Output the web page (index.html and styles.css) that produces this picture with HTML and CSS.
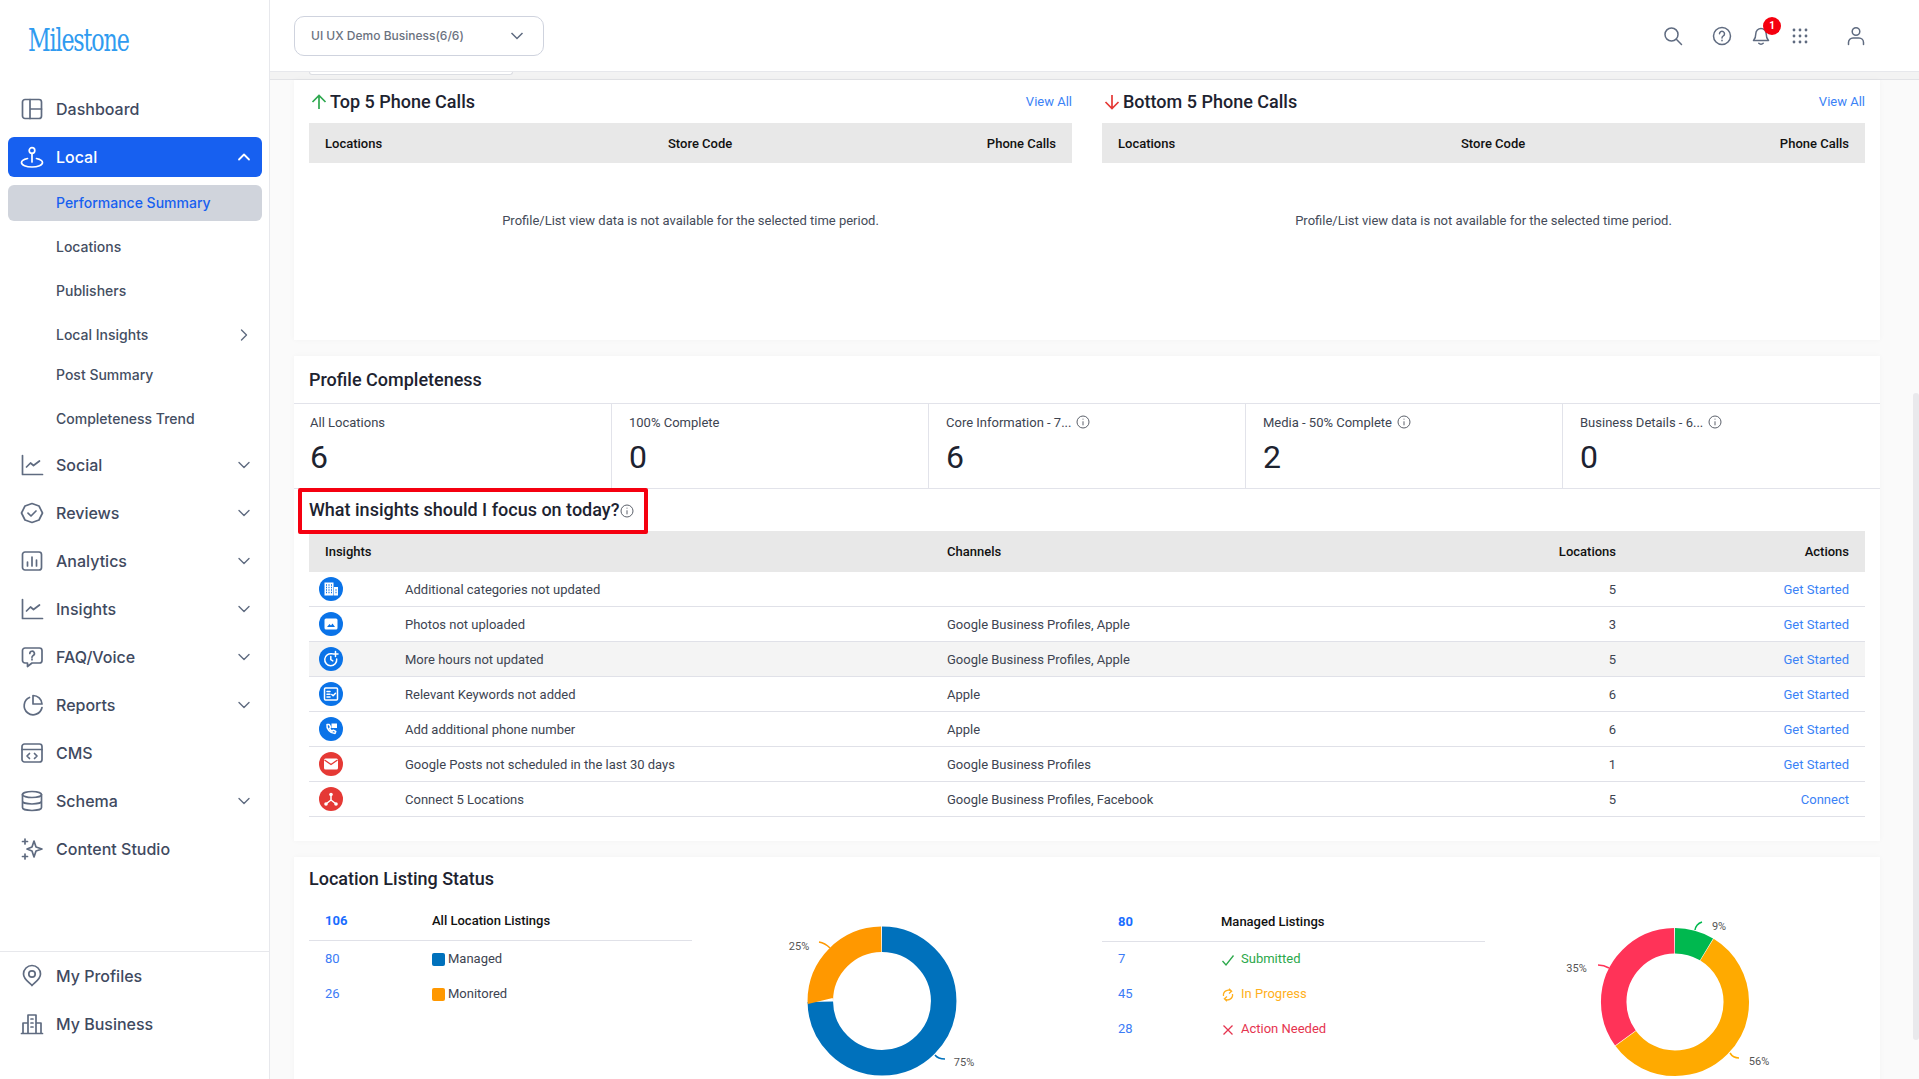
FILE: index.html
```html
<!DOCTYPE html>
<html lang="en">
<head>
<meta charset="utf-8">
<title>Performance Summary</title>
<link rel="stylesheet" href="styles.css">
</head>
<body>
<div class="app">
  <aside class="sidebar">
    <div class="logo-wrap"><span class="logo">Milestone</span></div>
    <nav class="nav">
      <a class="item"><svg class="ic" viewBox="0 0 24 24"><rect x="2.500" y="2.500" width="19" height="19" rx="2.500"/><path d="M10 2.500v19M10 12h11.500"/></svg><span>Dashboard</span></a>
      <a class="item active"><svg class="ic" viewBox="0 0 24 24"><circle cx="12" cy="5.500" r="2.800"/><path d="M12 8.300V17M7.500 13.500C4 14.300 1.500 15.800 1.500 17.500c0 2.500 4.500 4.500 10.500 4.500s10.500-2 10.500-4.500c0-1.700-2.500-3.200-6-4"/></svg><span>Local</span><svg class="chev" viewBox="0 0 14 14"><path d="M2 9.500l5-5 5 5"/></svg></a>
      <a class="sub current">Performance Summary</a>
      <a class="sub">Locations</a>
      <a class="sub">Publishers</a>
      <a class="sub">Local Insights<svg class="chev" viewBox="0 0 14 14"><path d="M4.500 2l5 5-5 5"/></svg></a>
      <a class="sub tight">Post Summary</a>
      <a class="sub">Completeness Trend</a>
      <a class="item"><svg class="ic" viewBox="0 0 24 24"><path d="M2.500 2.500v19h20M6.500 14l4-4 3 2.500 6-4.500"/></svg><span>Social</span><svg class="chev" viewBox="0 0 14 14"><path d="M2 4.500l5 5 5-5"/></svg></a>
      <a class="item"><svg class="ic" viewBox="0 0 24 24"><path d="M12 2.500l7 2.500 3.500 7-3.500 7-7 2.500-7-2.500L1.500 12 5 5z"/><path d="M8 12.200l3 2.800 5-5"/></svg><span>Reviews</span><svg class="chev" viewBox="0 0 14 14"><path d="M2 4.500l5 5 5-5"/></svg></a>
      <a class="item"><svg class="ic" viewBox="0 0 24 24"><rect x="2.500" y="3" width="19" height="18" rx="2.500"/><path d="M7.500 13v4M12 8v9M16.500 11v6"/></svg><span>Analytics</span><svg class="chev" viewBox="0 0 14 14"><path d="M2 4.500l5 5 5-5"/></svg></a>
      <a class="item"><svg class="ic" viewBox="0 0 24 24"><path d="M2.500 2.500v19h20M6.500 14l4-4 3 2.500 6-4.500"/></svg><span>Insights</span><svg class="chev" viewBox="0 0 14 14"><path d="M2 4.500l5 5 5-5"/></svg></a>
      <a class="item"><svg class="ic" viewBox="0 0 24 24"><path d="M5 3h14.500a2.500 2.500 0 0 1 2.500 2.500v10a2.500 2.500 0 0 1-2.500 2.500H12l-4.500 3.500V18H5a2.500 2.500 0 0 1-2.500-2.500v-10A2.500 2.500 0 0 1 5 3z"/><path d="M9.800 8.500a2.300 2.300 0 1 1 3.400 2c-.8.500-1.200 1-1.200 1.800M12 14.200v.6"/></svg><span>FAQ/Voice</span><svg class="chev" viewBox="0 0 14 14"><path d="M2 4.500l5 5 5-5"/></svg></a>
      <a class="item"><svg class="ic" viewBox="0 0 24 24"><path d="M9.500 4.500a9 9 0 1 0 12.500 10"/><path d="M13 2.500a9 9 0 0 1 9 8.500h-9z"/></svg><span>Reports</span><svg class="chev" viewBox="0 0 14 14"><path d="M2 4.500l5 5 5-5"/></svg></a>
      <a class="item"><svg class="ic" viewBox="0 0 24 24"><rect x="2" y="3" width="20" height="18" rx="2.500"/><path d="M2 8.500h20M9.500 12.500L7 15l2.500 2.500M14.500 12.500L17 15l-2.500 2.500"/></svg><span>CMS</span></a>
      <a class="item"><svg class="ic" viewBox="0 0 24 24"><ellipse cx="12" cy="5.500" rx="9.500" ry="3"/><path d="M2.500 5.500v13c0 1.700 4.300 3 9.500 3s9.500-1.300 9.500-3v-13M2.500 12c0 1.700 4.300 3 9.500 3s9.500-1.300 9.500-3"/></svg><span>Schema</span><svg class="chev" viewBox="0 0 14 14"><path d="M2 4.500l5 5 5-5"/></svg></a>
      <a class="item"><svg class="ic" viewBox="0 0 24 24"><path d="M14 4l2 6 6 2-6 2-2 6-2-6-5-2 5-2z"/><path d="M5 2v5M2.500 4.500h5M5 17v5M2.500 19.500h5"/></svg><span>Content Studio</span></a>
    </nav>
    <div class="side-foot">
      <a class="item"><svg class="ic" viewBox="0 0 24 24"><path d="M12 21.500c-2-2.500-8.500-6-8.500-11.500a8.500 8.500 0 0 1 17 0c0 5.500-6.500 9-8.500 11.500z"/><circle cx="12" cy="10" r="3.200"/></svg><span>My Profiles</span></a>
      <a class="item"><svg class="ic" viewBox="0 0 24 24"><path d="M1.500 21.500h21M3 21.500V11h5M8 21.500V3h8v18.500M16 11h5v10.500M11 7h2M11 11h2M11 15h2"/></svg><span>My Business</span></a>
    </div>
  </aside>

  <main class="main">
    <header class="topbar">
      <button class="picker"><span>UI UX Demo Business(6/6)</span><svg class="picker-chev" viewBox="0 0 14 14"><path d="M1.500 4l5.500 5.500L12.500 4"/></svg></button>
      <div class="tools">
        <svg class="tool t-search" viewBox="0 0 20 20"><circle cx="8.500" cy="8.500" r="6.500"/><path d="M13.300 13.300L18.500 18.500"/></svg>
        <svg class="tool t-help" viewBox="0 0 20 20"><circle cx="10" cy="10" r="8.500"/><path d="M7.500 7.800a2.500 2.500 0 1 1 3.800 2.100c-.9.500-1.300 1-1.300 2M10 14.200v.6"/></svg>
        <span class="bell">
          <svg class="tool" viewBox="0 0 20 20"><path d="M10 2.500a5.200 5.200 0 0 0-5.200 5.200c0 4.300-1.500 5.800-2.300 6.800h15c-.8-1-2.300-2.500-2.300-6.800A5.200 5.200 0 0 0 10 2.500zM7.800 17.300c1 1.100 3.400 1.100 4.400 0"/></svg>
          <span class="badge">1</span>
        </span>
        <svg class="tool t-grid" viewBox="0 0 16 16"><g><circle cx="2" cy="2" r="1.400"/><circle cx="8" cy="2" r="1.400"/><circle cx="14" cy="2" r="1.400"/><circle cx="2" cy="8" r="1.400"/><circle cx="8" cy="8" r="1.400"/><circle cx="14" cy="8" r="1.400"/><circle cx="2" cy="14" r="1.400"/><circle cx="8" cy="14" r="1.400"/><circle cx="14" cy="14" r="1.400"/></g></svg>
        <svg class="tool t-user" viewBox="0 0 20 20"><circle cx="10" cy="5.500" r="3.800"/><path d="M2.500 18.500v-2a4.500 4.500 0 0 1 4.500-4.500h6a4.500 4.500 0 0 1 4.500 4.500v2"/></svg>
      </div>
    </header>

    <div class="content">
      <div class="strip"><div class="peek"></div></div>

      <section class="card card-calls">
        <div class="calls">
          <div class="call-col">
            <div class="call-head">
              <h2 class="title"><svg class="arrow up" viewBox="0 0 16 16"><path d="M8 15V1.500M1.500 8L8 1.500 14.500 8"/></svg>Top 5 Phone Calls</h2>
              <a class="link">View All</a>
            </div>
            <div class="call-row"><span>Locations</span><span>Store Code</span><span class="right">Phone Calls</span></div>
            <p class="empty">Profile/List view data is not available for the selected time period.</p>
          </div>
          <div class="call-col">
            <div class="call-head">
              <h2 class="title"><svg class="arrow down" viewBox="0 0 16 16"><path d="M8 1v13.500M1.500 8L8 14.500 14.500 8"/></svg>Bottom 5 Phone Calls</h2>
              <a class="link">View All</a>
            </div>
            <div class="call-row"><span>Locations</span><span>Store Code</span><span class="right">Phone Calls</span></div>
            <p class="empty">Profile/List view data is not available for the selected time period.</p>
          </div>
        </div>
      </section>

      <section class="card card-profile">
        <h2 class="title profile-title">Profile Completeness</h2>
        <div class="stats">
          <div class="stat"><div class="stat-label">All Locations</div><div class="stat-val">6</div></div>
          <div class="stat"><div class="stat-label">100% Complete</div><div class="stat-val">0</div></div>
          <div class="stat"><div class="stat-label">Core Information - 7...<svg class="info" viewBox="0 0 14 14"><circle cx="7" cy="7" r="6"/><path d="M7 6.300v4M7 3.700v.9"/></svg></div><div class="stat-val">6</div></div>
          <div class="stat"><div class="stat-label">Media - 50% Complete<svg class="info" viewBox="0 0 14 14"><circle cx="7" cy="7" r="6"/><path d="M7 6.300v4M7 3.700v.9"/></svg></div><div class="stat-val">2</div></div>
          <div class="stat"><div class="stat-label">Business Details - 6...<svg class="info" viewBox="0 0 14 14"><circle cx="7" cy="7" r="6"/><path d="M7 6.300v4M7 3.700v.9"/></svg></div><div class="stat-val">0</div></div>
        </div>
        <div class="focus"><h2 class="title focus-title">What insights should I focus on today?<svg class="info" viewBox="0 0 14 14"><circle cx="7" cy="7" r="6"/><path d="M7 6.300v4M7 3.700v.9"/></svg></h2></div>
        <div class="insights">
          <div class="in-row in-head"><span>Insights</span><span>Channels</span><span class="right">Locations</span><span class="right">Actions</span></div>
          <div class="in-row">
            <span class="dot blue"><svg viewBox="0 0 24 24"><path class="fill" d="M5.500 5.500h9v13h-9zM15 10h4v8.500h-4z"/><path class="cut" d="M7 8h1M9.500 8h1M12 8h1M7 10.500h1M9.500 10.500h1M12 10.500h1M7 13h1M9.500 13h1M12 13h1M7 15.500h1M9.500 15.500h1M12 15.500h1M16.500 13h1M16.500 15.500h1"/></svg></span>
            <span>Additional categories not updated</span><span></span><span class="right">5</span><a class="link right">Get Started</a>
          </div>
          <div class="in-row">
            <span class="dot blue"><svg viewBox="0 0 24 24"><rect class="fill" x="5.500" y="6.500" width="13" height="11" rx="1.500"/><path class="cutfill" d="M8 15l2.500-3 1.500 1.500 1.500-2 2.500 3.500z"/></svg></span>
            <span>Photos not uploaded</span><span>Google Business Profiles, Apple</span><span class="right">3</span><a class="link right">Get Started</a>
          </div>
          <div class="in-row hover">
            <span class="dot blue"><svg viewBox="0 0 24 24"><path class="line" d="M13 6.800a6 6 0 1 0 4.700 5.200M11.800 9.500v3.200l2 1.200M16.500 4.500v5M14 7h5"/></svg></span>
            <span>More hours not updated</span><span>Google Business Profiles, Apple</span><span class="right">5</span><a class="link right">Get Started</a>
          </div>
          <div class="in-row">
            <span class="dot blue"><svg viewBox="0 0 24 24"><rect class="line" x="5.500" y="6" width="13" height="12" rx="1"/><path class="line" d="M8 9.500h3M8 12.300h3M8 15h3M12.800 12.500l1.300 1.300 2.400-2.600"/></svg></span>
            <span>Relevant Keywords not added</span><span>Apple</span><span class="right">6</span><a class="link right">Get Started</a>
          </div>
          <div class="in-row">
            <span class="dot blue"><svg viewBox="0 0 24 24"><path class="line" d="M8 7.500c-.8 4 3 8.800 8 9l.8-2-2.500-1.300-1.200 1c-1.200-.7-2-1.600-2.500-2.800l1-1.200L10.300 7.500z"/><rect class="fill" x="12.500" y="6.500" width="5.500" height="4.500"/></svg></span>
            <span>Add additional phone number</span><span>Apple</span><span class="right">6</span><a class="link right">Get Started</a>
          </div>
          <div class="in-row">
            <span class="dot red"><svg viewBox="0 0 24 24"><rect class="fill" x="5" y="6.500" width="14" height="11" rx="1.500"/><path class="cutred" d="M5.500 8l6.500 4.500L18.500 8"/></svg></span>
            <span>Google Posts not scheduled in the last 30 days</span><span>Google Business Profiles</span><span class="right">1</span><a class="link right">Get Started</a>
          </div>
          <div class="in-row">
            <span class="dot red"><svg viewBox="0 0 24 24"><path class="line" d="M12 8v5M12 13l-4.500 3.500M12 13l4.500 3.500"/><circle class="fill" cx="12" cy="7.500" r="1.800"/><circle class="fill" cx="7" cy="17" r="1.800"/><circle class="fill" cx="17" cy="17" r="1.800"/></svg></span>
            <span>Connect 5 Locations</span><span>Google Business Profiles, Facebook</span><span class="right">5</span><a class="link right">Connect</a>
          </div>
        </div>
      </section>

      <section class="card card-listing">
        <h2 class="title listing-title">Location Listing Status</h2>
        <div class="listing">
          <div class="half">
            <div class="list">
              <div class="l-row l-head"><b class="num">106</b><b>All Location Listings</b></div>
              <div class="l-row"><span class="num">80</span><span class="lab"><i class="sw sw-blue"></i>Managed</span></div>
              <div class="l-row"><span class="num">26</span><span class="lab"><i class="sw sw-orange"></i>Monitored</span></div>
            </div>
            <svg class="donut" viewBox="0 0 300 200">
              <g transform="rotate(-90 150 100)" fill="none" stroke-width="25.500">
                <circle cx="150" cy="100" r="61.700" pathLength="100" stroke="#0071bc" stroke-dasharray="74.800 25.200"/>
                <circle cx="150" cy="100" r="61.700" pathLength="100" stroke="#ff9800" stroke-dasharray="24.800 75.200" stroke-dashoffset="-75"/>
              </g>
              <path class="lead" stroke="#ff9800" d="M87 41Q93 42 98 47"/>
              <path class="lead" stroke="#0071bc" d="M203 154Q206 158 213 158"/>
              <text x="67" y="49" class="pct">25%</text>
              <text x="232" y="165" class="pct">75%</text>
            </svg>
          </div>
          <div class="half half-r">
            <div class="list">
              <div class="l-row l-head"><b class="num">80</b><b>Managed Listings</b></div>
              <div class="l-row"><span class="num">7</span><span class="lab green"><svg class="st" viewBox="0 0 14 14"><path d="M1.500 8l3.500 4 7.500-9.500"/></svg>Submitted</span></div>
              <div class="l-row"><span class="num">45</span><span class="lab amber"><svg class="st" viewBox="0 0 14 14"><path d="M10.500 3.200A5 5 0 0 0 2.500 8M3.500 10.800A5 5 0 0 0 11.500 6M8 .8l2.600 2.400L8 5.500M6 8.500l-2.600 2.300L6 13.200"/></svg>In Progress</span></div>
              <div class="l-row"><span class="num">28</span><span class="lab rose"><svg class="st" viewBox="0 0 14 14"><path d="M2.500 2.500l9 9M11.500 2.500l-9 9"/></svg>Action Needed</span></div>
            </div>
            <svg class="donut" viewBox="0 0 300 200">
              <g transform="rotate(-90 150 101)" fill="none" stroke-width="25.500">
                <circle cx="150" cy="101" r="61.300" pathLength="100" stroke="#00b84f" stroke-dasharray="8.600 91.400"/>
                <circle cx="150" cy="101" r="61.300" pathLength="100" stroke="#ffaa00" stroke-dasharray="56.100 43.900" stroke-dashoffset="-8.750"/>
                <circle cx="150" cy="101" r="61.300" pathLength="100" stroke="#ff3358" stroke-dasharray="34.800 65.200" stroke-dashoffset="-65"/>
              </g>
              <path class="lead" stroke="#00b84f" d="M170 29Q171 23 177 21"/>
              <path class="lead" stroke="#ffaa00" d="M205 152Q208 157 214 157"/>
              <path class="lead" stroke="#ff3358" d="M73 64Q79 64 84 67"/>
              <text x="194" y="29" class="pct">9%</text>
              <text x="234" y="164" class="pct">56%</text>
              <text x="51.500" y="71" class="pct">35%</text>
            </svg>
          </div>
        </div>
      </section>
    </div>
    <div class="scroll-thumb"></div>
  </main>
</div>
</body>
</html>
```

FILE: styles.css
```css
* { box-sizing: border-box; }
html, body { margin: 0; height: 100%; overflow: hidden; background: #fff; }
body { font-family: Roboto, "Liberation Sans", sans-serif; font-size: 13px; color: #3d4451; }
a { text-decoration: none; color: inherit; }
h2, p { margin: 0; }

.app { display: flex; height: 1079px; }

/* Sidebar */
.sidebar { width: 270px; flex: none; border-right: 1px solid #e7e8ec; display: flex; flex-direction: column; font-family: Inter, "Liberation Sans", sans-serif; background: #fff; }
.logo-wrap { height: 89px; padding: 22px 0 0 28px; flex: none; }
.logo { display: inline-block; font-family: "DejaVu Serif Condensed", "DejaVu Serif", serif; font-size: 32px; line-height: 36px; letter-spacing: -1.500px; color: #2f9bf0; transform: scaleX(.77); transform-origin: left center; white-space: nowrap; }
.nav { flex: 1; display: flex; flex-direction: column; gap: 8px; padding: 0 7px 0 8px; }
.item { height: 40px; display: flex; align-items: center; gap: 12px; padding: 0 10px 0 12px; border-radius: 6px; font-size: 16px; font-weight: 500; color: #3f4a5f; flex: none; }
.ic { width: 24px; height: 24px; flex: none; fill: none; stroke: #5f6b80; stroke-width: 1.700; stroke-linecap: round; stroke-linejoin: round; }
.chev { width: 14px; height: 14px; margin-left: auto; flex: none; fill: none; stroke: #5f6b80; stroke-width: 1.400; stroke-linecap: round; stroke-linejoin: round; }
.item .chev { margin-right: 1px; }
.active { background: #1760f0; color: #fff; }
.active .ic, .active .chev { stroke: #fff; }
.active .chev { stroke-width: 1.800; }
.sub { height: 36px; display: flex; align-items: center; padding: 0 11px 1px 48px; border-radius: 6px; font-size: 14px; font-weight: 500; color: #444e62; flex: none; }
.sub.tight { margin-top: -4px; }
.current { background: #d0d4dc; color: #1760f0; }
.side-foot { border-top: 1px solid #e7e8ec; padding: 4px 8px 35px; display: flex; flex-direction: column; gap: 8px; flex: none; }

/* Main */
.main { flex: 1; min-width: 0; display: flex; flex-direction: column; position: relative; background: #fff; }
.topbar { height: 72px; flex: none; border-bottom: 1px solid #e7e8ec; padding: 0 39px 0 24px; display: flex; align-items: center; justify-content: space-between; background: #fff; }
.picker { width: 250px; height: 40px; border: 1px solid #cfd3de; border-radius: 10px; background: #fff; padding: 0 19px 0 16px; display: flex; align-items: center; justify-content: space-between; font-family: Inter, sans-serif; font-size: 12px; font-weight: 500; color: #6b7280; }
.picker-chev { width: 14px; height: 14px; fill: none; stroke: #5f6b80; stroke-width: 1.500; }
.tools { display: flex; align-items: center; margin-right: 14px; }
.tool { width: 20px; height: 20px; fill: none; stroke: #5f6b80; stroke-width: 1.500; stroke-linecap: round; stroke-linejoin: round; display: block; flex: none; }
.t-search { margin-right: 1px; }
.t-help { margin-left: 28px; }
.bell { position: relative; margin-left: 19px; display: block; }
.badge { position: absolute; left: 12px; top: -9px; width: 18px; height: 18px; border-radius: 50%; background: #f5000f; color: #fff; font-size: 10px; font-weight: 700; display: flex; align-items: center; justify-content: center; }
.t-grid { margin-left: 21px; width: 16px; height: 16px; fill: #5f6b80; stroke: none; }
.t-user { margin-left: 38px; }

.content { flex: 1; min-height: 0; overflow: hidden; background: #fafafa; padding: 0 39px 0 24px; display: flex; flex-direction: column; gap: 16px; }
.strip { height: 8px; flex: none; background: #f3f3f3; margin: 0 -39px -16px -24px; padding-left: 39px; border-bottom: 1px solid #e2e3e6; }
.peek { width: 204px; height: 3px; background: #fff; border: 1px solid #dcdee3; border-top: 0; border-radius: 0 0 6px 6px; }
.card { background: #fff; flex: none; box-shadow: 0 0 6px rgba(0,0,0,.03); }
.title { font-size: 18px; line-height: 22px; font-weight: 500; color: #1d2330; display: flex; align-items: center; }

/* Phone calls */
.card-calls { height: 260px; padding: 5px 15px 0; }
.calls { display: grid; grid-template-columns: 763px 763px; column-gap: 30px; }
.call-head { height: 33px; margin-bottom: 5px; display: flex; align-items: center; justify-content: space-between; }
.arrow { width: 16px; height: 16px; margin: 0 3px 0 2px; fill: none; stroke-width: 1.700; }
.up { stroke: #2ea84f; }
.down { stroke: #e53935; }
.link { color: #3b82f6; font-size: 13px; }
.call-row { height: 40px; background: #e8e8e8; display: grid; grid-template-columns: 343px 1fr auto; align-items: center; padding: 0 16px; color: #111; font-weight: 500; font-size: 13px; }
.right { text-align: right; }
.empty { text-align: center; margin-top: 49px; line-height: 18px; color: #444b59; font-size: 13px; }

/* Profile completeness */
.card-profile { height: 485px; position: relative; }
.profile-title { height: 48px; padding: 0 15px; border-bottom: 1px solid #e2e3ea; }
.stats { display: grid; grid-template-columns: 318px repeat(4, 1fr); height: 85px; border-bottom: 1px solid #e2e3ea; }
.stat { padding: 9px 16px 0 17px; border-right: 1px solid #e2e3ea; }
.stat:first-child { padding-left: 16px; }
.stat:last-child { border-right: 0; }
.stat-label { display: flex; align-items: center; gap: 5px; height: 18px; color: #3d4451; font-size: 13px; white-space: pre; }
.stat-val { font-size: 32px; line-height: 38px; margin-top: 7px; color: #1d2330; }
.info { width: 14px; height: 14px; fill: none; stroke: #5c616b; stroke-width: 1; flex: none; }
.focus-title .info { margin-left: 1px; margin-top: 2px; }
.focus { margin: -1px 0 -3px 4px; width: 350px; height: 46px; border: 4px solid #f50010; border-radius: 2px; position: relative; z-index: 1; padding: 0 0 2px 7px; display: flex; align-items: center; }
.insights { padding: 0 15px; }
.in-row { display: grid; grid-template-columns: 96px 542px 400px 269px 233px; align-items: center; height: 35px; border-bottom: 1px solid #e0e1e8; color: #3d4451; width: 1556px; padding-right: 16px; }
.in-head { height: 41px; background: #e8e8e8; border-bottom: 0; color: #111; font-weight: 500; padding-left: 16px; grid-template-columns: 622px 400px 269px 233px; }
.hover { background: #f4f4f4; }
.dot { width: 24px; height: 24px; border-radius: 50%; margin-left: 10px; display: block; }
.dot svg { width: 24px; height: 24px; display: block; }
.blue { background: #0a73e8; }
.red { background: #e53935; }
.fill { fill: #fff; }
.cut { stroke: #0a73e8; stroke-width: 1.300; fill: none; }
.cutfill { fill: #0a73e8; }
.cutred { stroke: #e53935; stroke-width: 1.300; fill: none; }
.line { stroke: #fff; stroke-width: 1.500; fill: none; stroke-linecap: round; stroke-linejoin: round; }

/* Listing */
.card-listing { padding: 12px 15px 0; height: 240px; }
.listing-title { height: 20px; }
.listing { display: grid; grid-template-columns: 763px 763px; column-gap: 30px; margin-top: 12px; }
.half { display: flex; align-items: flex-start; }
.list { width: 383px; flex: none; }
.half-r .list { padding-top: 1px; }
.l-row { display: grid; grid-template-columns: 107px 1fr; height: 35px; align-items: center; padding-left: 16px; }
.half-r .l-row { grid-template-columns: 103px 1fr; padding-bottom: 2px; }
.l-row.l-head { height: 40px; border-bottom: 1px solid #e0e1e8; }
.half-r .l-row.l-head { padding-bottom: 0; }
.l-head b { font-weight: 500; color: #111; }
.l-head .num { font-weight: 700; color: #1a6dff; }
.num { color: #3b7cf6; }
.lab { display: flex; align-items: center; color: #3d4451; }
.sw { width: 13px; height: 13px; border-radius: 2px; margin-right: 3px; margin-top: 2px; flex: none; }
.sw-blue { background: #0071bc; }
.sw-orange { background: #ff9800; }
.st { width: 14px; height: 14px; margin-right: 6px; fill: none; stroke: currentColor; stroke-width: 1.300; flex: none; margin-top: 2px; }
.green { color: #2ba84a; }
.amber { color: #ffb020; }
.rose { color: #e5344f; }
.donut { width: 300px; height: 200px; margin-left: 40px; flex: none; overflow: visible; }
.lead { fill: none; stroke-width: 1.500; }
.pct { font-size: 11px; fill: #555; text-anchor: middle; font-family: Roboto, sans-serif; }

.scroll-thumb { position: absolute; right: 0; top: 393px; width: 6px; height: 647px; background: #e9e9ec; border-radius: 4px; }
```
